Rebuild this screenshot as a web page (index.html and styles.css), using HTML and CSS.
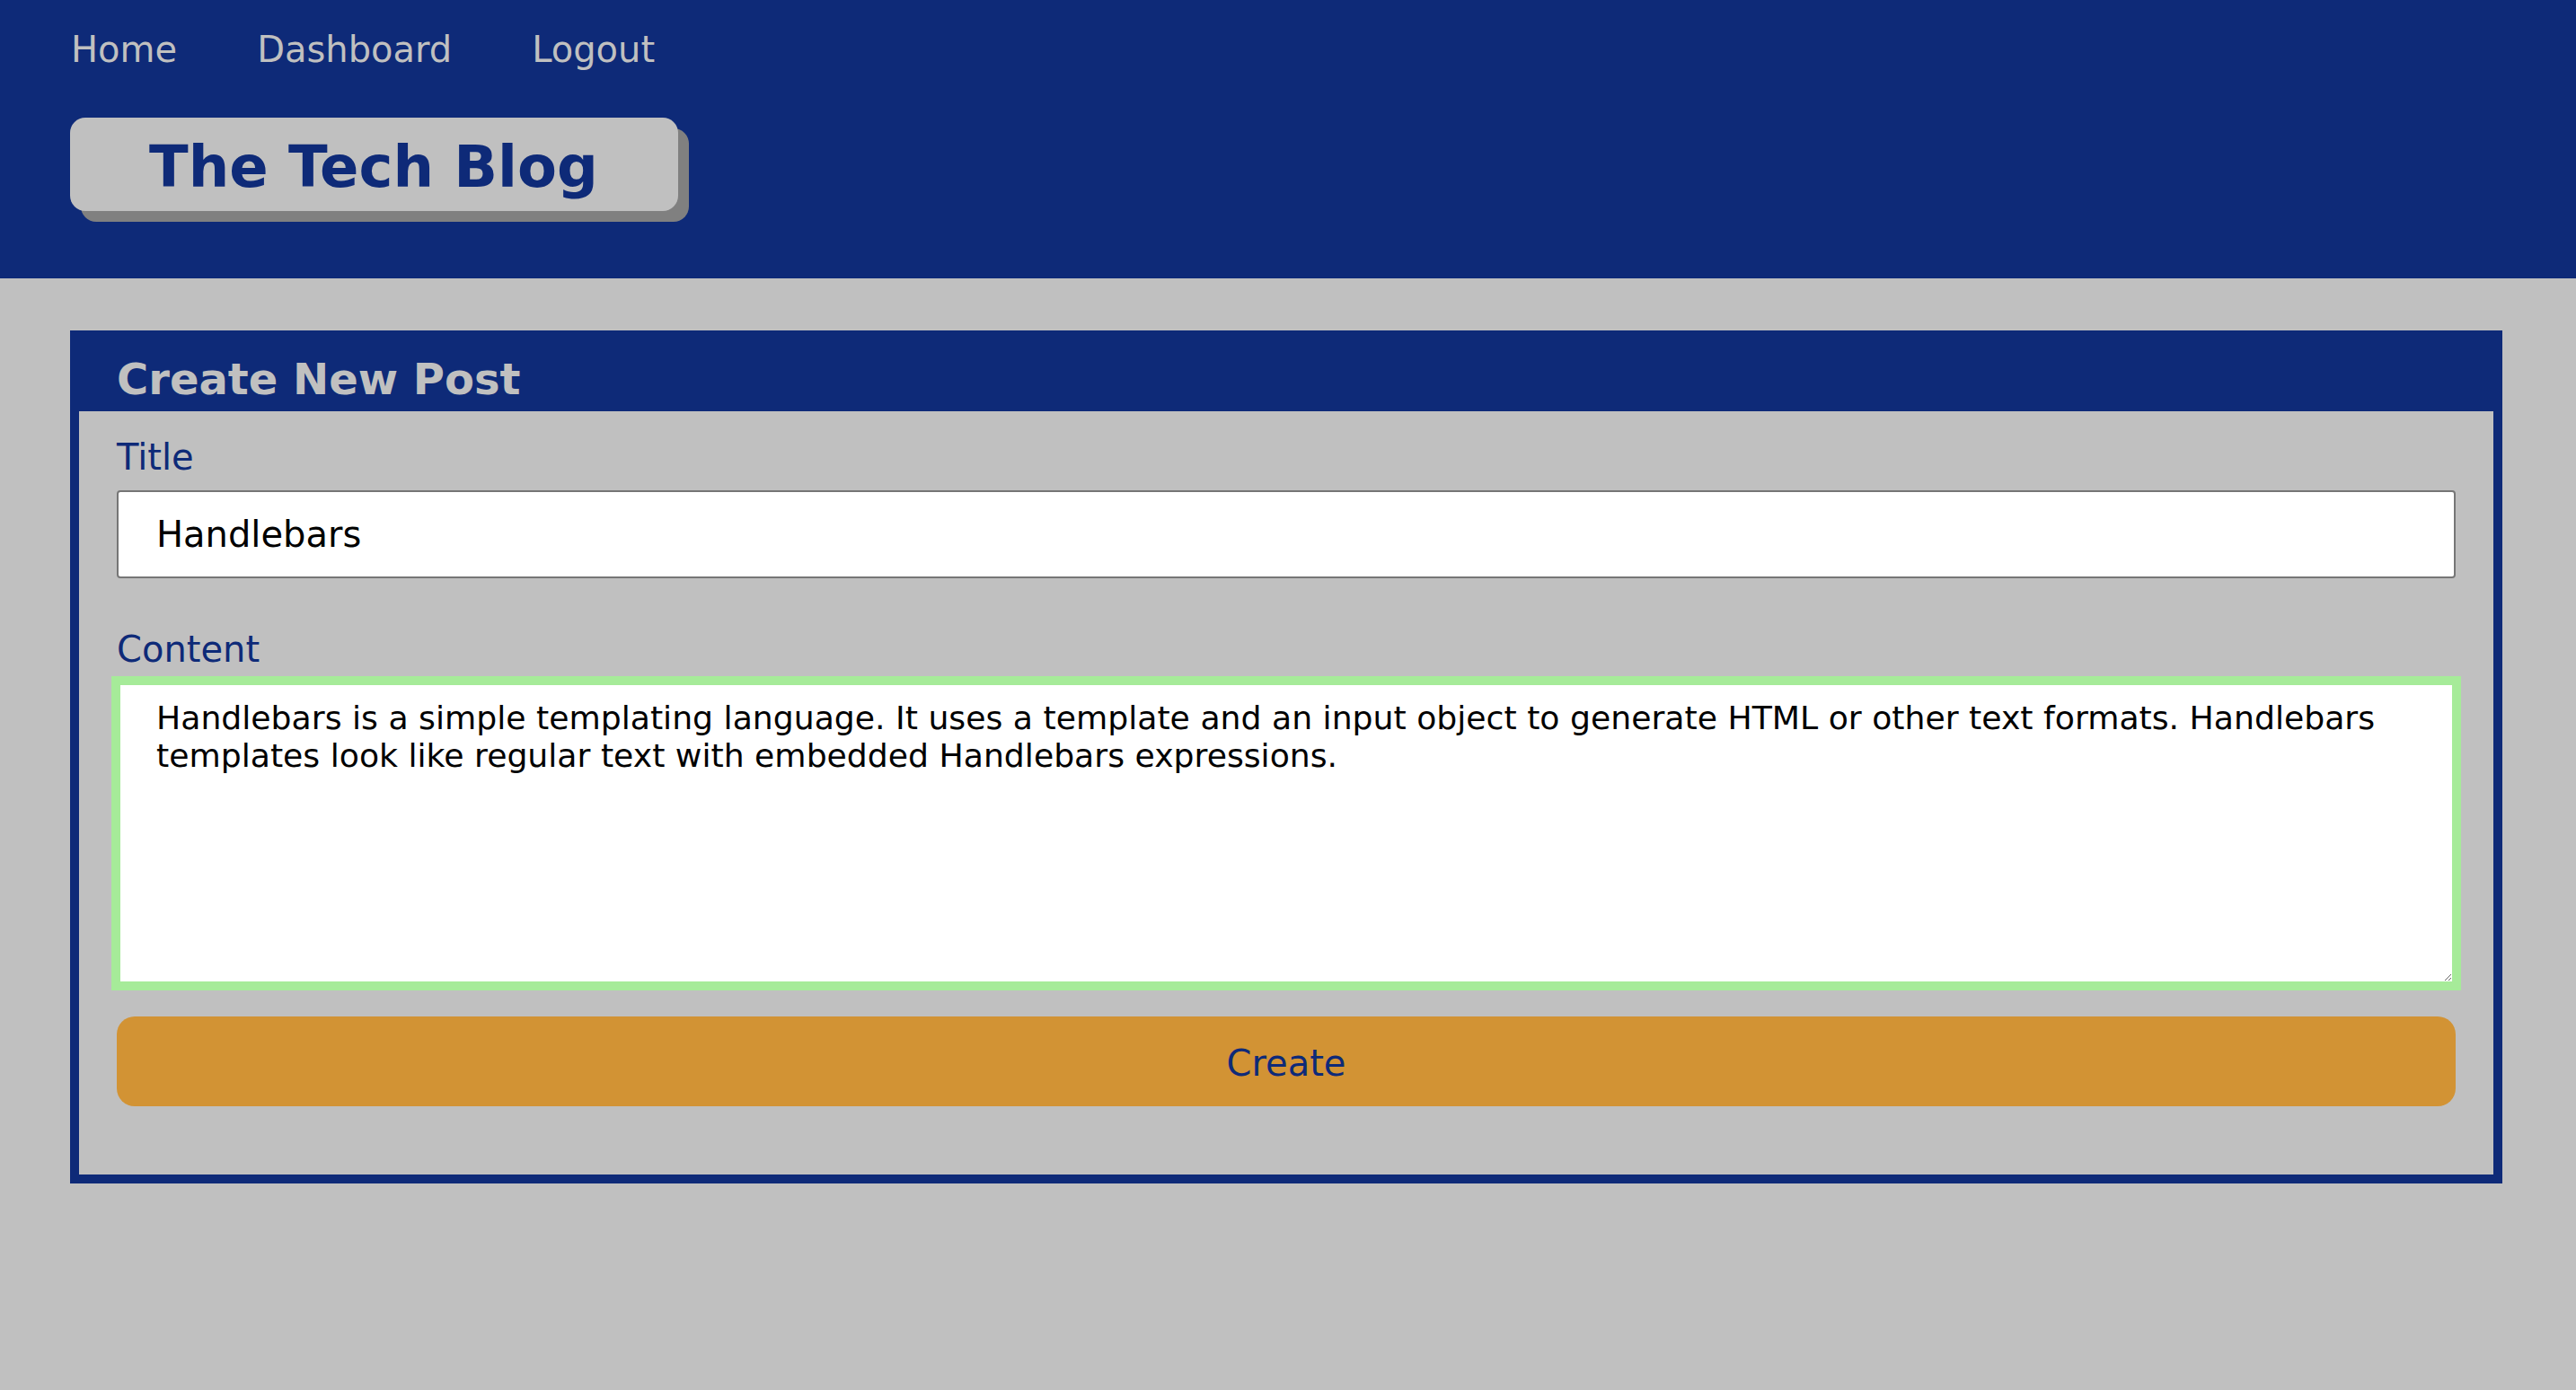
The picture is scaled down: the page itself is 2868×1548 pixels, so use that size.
FILE: index.html
```html
<!DOCTYPE html>
<html lang="en">
<head>
<meta charset="utf-8">
<title>The Tech Blog</title>
<link rel="stylesheet" href="styles.css">
</head>
<body>
<header class="site-header">
  <nav class="nav">
    <a class="nav-link" href="#">Home</a>
    <a class="nav-link" href="#">Dashboard</a>
    <a class="nav-link" href="#">Logout</a>
  </nav>
  <h1 class="logo">The Tech Blog</h1>
</header>
<main class="main">
  <section class="post-card">
    <h2 class="post-card-title">Create New Post</h2>
    <form class="post-form">
      <label class="field-label" for="title">Title</label>
      <input class="text-input" id="title" type="text" value="Handlebars">
      <label class="field-label content-label" for="content">Content</label>
      <textarea class="content-input" id="content">Handlebars is a simple templating language. It uses a template and an input object to generate HTML or other text formats. Handlebars templates look like regular text with embedded Handlebars expressions.</textarea>
      <button class="create-btn" type="button">Create</button>
    </form>
  </section>
</main>
<script src="script.js"></script>
</body>
</html>
```
FILE: styles.css
```css
html, body {
  margin: 0;
  padding: 0;
}
html {
  background: #c0c0c0;
}
body {
  background: #c0c0c0;
  font-family: Verdana, "DejaVu Sans", sans-serif;
}
.site-header {
  background: #0e2a78;
  height: 310px;
  box-sizing: border-box;
  padding: 32px 78px 0 78px;
}
.nav {
  display: flex;
  gap: 89px;
  padding-left: 1px;
}
.nav-link {
  color: #c0c0c0;
  text-decoration: none;
  font-size: 40px;
  line-height: 47px;
}
.logo {
  display: inline-block;
  margin: 52px 0 0 0;
  background: #c0c0c0;
  color: #0e2a78;
  font-size: 64px;
  font-weight: bold;
  line-height: 74px;
  padding: 18px 89px 12px 88px;
  border-radius: 17px;
  box-shadow: 12px 12px 0 #808080;
}
.main {
  padding: 58px 82px 0 78px;
}
.post-card {
  border: 10px solid #0e2a78;
  background: #c0c0c0;
}
.post-card-title {
  margin: 0;
  background: #0e2a78;
  color: #c0c0c0;
  font-size: 48px;
  font-weight: bold;
  height: 80px;
  box-sizing: border-box;
  padding: 16px 0 0 42px;
  line-height: 56px;
}
.post-form {
  display: flex;
  flex-direction: column;
  padding: 28px 42px 76px 42px;
}
.field-label {
  color: #0e2a78;
  font-size: 40px;
  line-height: 47px;
}
.content-label {
  margin-top: 56px;
}
.text-input {
  margin-top: 13px;
  height: 98px;
  box-sizing: border-box;
  border: 2px solid #767676;
  border-radius: 4px;
  background: #fff;
  padding: 0 42px;
  font-family: Verdana, "DejaVu Sans", sans-serif;
  font-size: 40px;
  color: #000;
}
.content-input {
  margin-top: 12px;
  height: 338px;
  box-sizing: border-box;
  border: 4px solid #a6eb99;
  outline: 6px solid #a6eb99;
  outline-offset: 0;
  border-radius: 0;
  background: #fff;
  padding: 16px 40px;
  font-family: Verdana, "DejaVu Sans", sans-serif;
  font-size: 36.2px;
  line-height: 42px;
  color: #000;
  caret-color: #000;
}
.content-input:focus {
  outline: 6px solid #a6eb99;
}
.create-btn {
  margin-top: 35px;
  height: 100px;
  border: none;
  border-radius: 20px;
  background: #d29334;
  color: #0e2a78;
  font-family: Verdana, "DejaVu Sans", sans-serif;
  font-size: 40px;
  padding: 4px 0 0 0;
  cursor: pointer;
}
```
FILE: script.js
```js
const area = document.querySelector('.content-input');
area.focus();
const pos = area.value.indexOf('It uses');
area.setSelectionRange(pos, pos);
```
